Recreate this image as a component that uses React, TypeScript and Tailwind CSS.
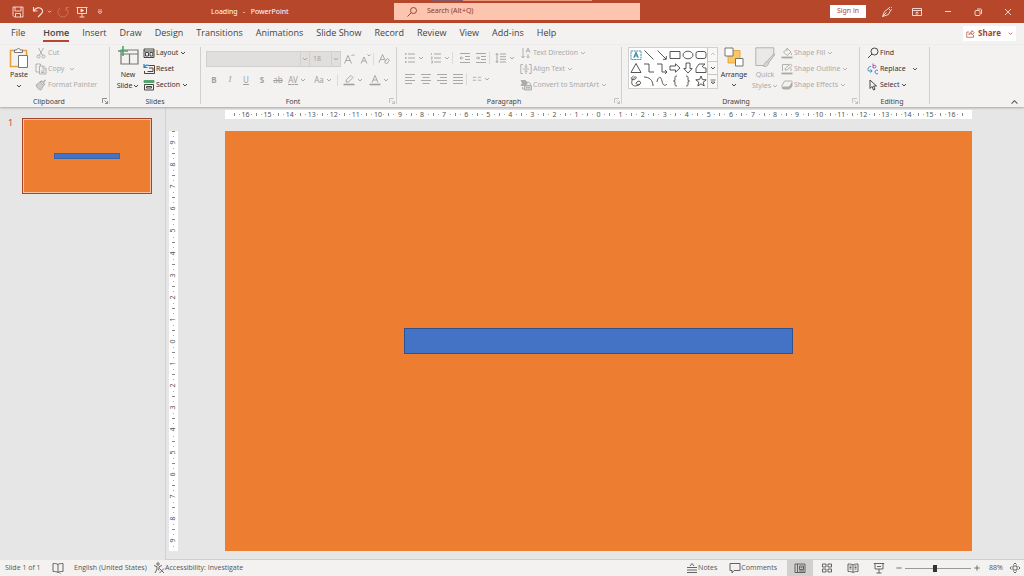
import type { ReactNode } from "react";

interface IconProps {
    children: ReactNode;
    box?: string;
    className?: string;
}

const Icon = ({ children, box = "0 0 12 12", className = "size-3" }: IconProps) => (
    <svg
        viewBox={box}
        className={`shrink-0 ${className}`}
        fill="none"
        stroke="currentColor"
        strokeWidth="0.9"
        aria-hidden="true"
    >
        {children}
    </svg>
);

const Chevron = ({ className = "size-[6px]" }: { className?: string }) => (
    <Icon box="0 0 6 6" className={className}>
        <path d="M1 2l2 2 2-2" />
    </Icon>
);

const Launcher = ({ muted }: { muted?: boolean }) => (
    <button
        aria-label="More options"
        className={`absolute right-[2px] bottom-[3px] ${muted ? "text-[#b0aeac]" : "text-[#666]"}`}
    >
        <Icon box="0 0 6 6" className="size-[6px]">
            <path d="M.5 5V.5H5M2.5 2.5l3 3M5.5 3v2.5H3" strokeWidth="0.7" />
        </Icon>
    </button>
);

interface GroupProps {
    label: string;
    className: string;
    launcher?: ReactNode;
    children: ReactNode;
}

const Group = ({ label, className, launcher, children }: GroupProps) => (
    <section
        className={`relative flex h-[62px] shrink-0 flex-col justify-between after:absolute after:right-0 after:top-[2px] after:bottom-[3px] after:w-px after:bg-[#d2d0ce] ${className}`}
    >
        <div className="flex h-12">{children}</div>
        <div className="h-[11px] text-center text-[7px] leading-[11px] text-[#444]">{label}</div>
        {launcher}
    </section>
);

interface RowProps {
    icon: ReactNode;
    label: string;
    menu?: boolean;
    disabled?: boolean;
}

const RowButton = ({ icon, label, menu, disabled }: RowProps) => (
    <button
        disabled={disabled}
        className="flex h-4 items-center gap-px whitespace-nowrap text-[7px] text-[#333] disabled:text-[#acaaa8]"
    >
        {icon}
        <span>{label}</span>
        {menu && <Chevron className="ml-px size-[6px]" />}
    </button>
);

const ToolButton = ({ label, className = "w-4", children }: { label: string; className?: string; children: ReactNode }) => (
    <button
        disabled
        aria-label={label}
        className={`flex h-4 shrink-0 items-center justify-center gap-[2px] ${className}`}
    >
        {children}
    </button>
);

const Separator = () => <span className="h-3 w-px shrink-0 bg-[#dcdad8]" />;

const tabs = [
    "Insert", "Draw", "Design", "Transitions", "Animations", "Slide Show",
    "Record", "Review", "View", "Add-ins", "Help",
];

const shapes: ReactNode[] = [
    <g stroke="#2f8aa8" key="text">
        <path d="M1 2h10v8.500H1z" strokeDasharray="2 .6" />
        <path d="M3.800 8.800L6 3.500l2.200 5.300M4.600 7h2.800" strokeWidth="1.200" />
    </g>,
    <path key="line" d="M1.500 1.500l9 9" />,
    <path key="arrow" d="M1.500 1.500l8.500 8.500M10.300 7v3.300H7" />,
    <path key="rect" d="M1 2.500h10v7H1z" />,
    <ellipse key="oval" cx="6" cy="6" rx="5" ry="3.8" />,
    <rect key="round" x="1" y="2.500" width="10" height="7" rx="2" />,
    <path key="triangle" d="M6 1.500l5 9H1z" />,
    <path key="elbow" d="M1 2h5v8h5" />,
    <path key="elbow-arrow" d="M1 2h5v8h5M9 8l2 2-2 2" />,
    <path key="right" d="M1 4h5.500V1.800L11 6l-4.500 4.200V8H1z" />,
    <path key="down" d="M4 1v5.500H1.800L6 11l4.200-4.500H8V1z" />,
    <path key="free" d="M1 10.500V6.500l3-4.500h6L7.500 4c0 1.500 1 2 3.500 2v4.500z" />,
    <path key="scribble" d="M3.500 1C0 3 1 5.500 4 4.500S7 1.500 5 2 1 6 2 9s6 2 8 0-1-4-3-2 0 3 3 2.500" />,
    <path key="arc" d="M1 2c5 0 9 3 9 9" />,
    <path key="curve" d="M1 7c1-6 4-6 5-1s3 5 5 3" />,
    <path key="left-brace" d="M8 1C5.500 1 6 2 6 4S5.500 6 4.500 6C5.500 6 6 6 6 8s-.5 3 2 3" />,
    <path key="right-brace" d="M4 1c2.500 0 2 1 2 3s.5 2 1.500 2C6.500 6 6 6 6 8s.5 3-2 3" />,
    <path key="star" d="M6 1l1.400 3.600 3.800.2-3 2.400 1 3.800L6 8.800 2.800 11l1-3.800-3-2.400 3.800-.2z" />,
];

const TitleBar = () => (
    <header className="relative flex h-[23px] items-center bg-[#b7472a] text-[#fbe4dc]">
        <div className="absolute left-[432px] top-0 flex h-px">
            <span className="w-[31px] bg-[#8b5a63]" />
            <span className="w-[129px] bg-[#ee9a7f]" />
        </div>
        <nav aria-label="Quick access" className="flex w-[211px] shrink-0 items-center pl-3">
            <button aria-label="Save">
                <Icon>
                    <path d="M1 1h10v10H2.500L1 9.500zM3 1v4h6V1M3.500 11V7.500h5V11" />
                </Icon>
            </button>
            <button aria-label="Undo" className="ml-2 flex items-center gap-[3px]">
                <Icon>
                    <path d="M1.500 1v4h4M1.500 5C4 1.500 7 1 9 2.500s2 3.500.5 5L6 11" strokeWidth="1.100" />
                </Icon>
                <Chevron className="size-[5px]" />
            </button>
            <button aria-label="Redo" className="ml-[5px] text-[#d0735b]" disabled>
                <Icon>
                    <path d="M3 2a5 5 0 1 0 6 0M9 5V1.500h3" />
                </Icon>
            </button>
            <button aria-label="Start from beginning" className="ml-[7px]">
                <Icon>
                    <path d="M.5 1.500h11M1.500 1.500v6h9v-6M6 7.500V11M3.500 11h5" />
                    <path d="M5 3l2.500 1.500L5 6z" fill="currentColor" />
                </Icon>
            </button>
            <button aria-label="Customize toolbar" className="ml-[9px]">
                <Icon box="0 0 6 6" className="size-[6px]">
                    <path d="M1 1h4M1 2.800l2 2 2-2z" strokeWidth=".7" />
                </Icon>
            </button>
        </nav>
        <h1 className="w-[183px] shrink-0 whitespace-pre pt-px text-[7px] text-white">Loading   -   PowerPoint</h1>
        <label className="flex h-[17px] w-[24%] items-center gap-[9px] bg-[#fdc4b0] pl-3 text-[#8f3b25]">
            <Icon>
                <circle cx="7.500" cy="4.500" r="3" />
                <path d="M5.300 6.700L1.500 10.500" />
            </Icon>
            <input
                type="text"
                aria-label="Search"
                placeholder="Search (Alt+Q)"
                className="w-full bg-transparent text-[7px] outline-none placeholder:text-[#8f3b25]"
            />
        </label>
        <div className="ml-auto flex items-center">
            <button className="h-[13px] w-9 bg-white text-[7px] text-[#b7472a]">Sign in</button>
            <button aria-label="Coming soon" className="ml-[15px]">
                <Icon>
                    <path d="M1.500 10.500l2-5 4-3 2 2-2 4-6 2M1.500 10.500l4-4M7.500 2.500L9 1M9.500 4.500L11 3.500M10 2l.8-.8" />
                </Icon>
            </button>
            <button aria-label="Ribbon display options" className="ml-[18px]">
                <Icon>
                    <path d="M1.500 2.500h9v7h-9zM1.500 4.500h9M6 9V6M4.500 7.200L6 5.800l1.500 1.400" />
                </Icon>
            </button>
            <button aria-label="Minimize" className="ml-[19px]">
                <Icon>
                    <path d="M3 5.500h6" />
                </Icon>
            </button>
            <button aria-label="Restore" className="ml-[18px]">
                <Icon>
                    <rect x="3" y="4.500" width="5" height="5" rx="1" />
                    <path d="M5 3h3.500c.6 0 1 .4 1 1v4" />
                </Icon>
            </button>
            <button aria-label="Close" className="ml-[18px] mr-[10px]">
                <Icon>
                    <path d="M3 3l6 6M9 3L3 9" />
                </Icon>
            </button>
        </div>
    </header>
);

const TabBar = () => (
    <div className="flex h-[22px] items-center bg-[#f3f2f1] pb-[2px] pl-[11px] pr-2 text-[9px] leading-[12px] text-[#444] font-['Open_Sans',sans-serif]">
        <nav className="flex items-center gap-[13px] whitespace-nowrap">
            <button className="mr-[5px]">File</button>
            <button className="relative font-semibold after:absolute after:inset-x-0 after:-bottom-[3px] after:h-[2px] after:bg-[#b7472a]">
                Home
            </button>
            {tabs.map((tab) => (
                <button key={tab}>{tab}</button>
            ))}
        </nav>
        <button className="ml-auto flex h-[15px] w-[53px] items-center justify-center gap-[3px] bg-white text-[8px] font-bold text-[#a4402a]">
            <Icon className="size-[9px]">
                <path d="M4 4H1v7h9V8M4 8c0-3 2-4 4-4V2l3 3-3 3V6C6 6 5 6.500 4 8z" />
            </Icon>
            Share
            <Chevron className="ml-1 size-[5px]" />
        </button>
    </div>
);

const ClipboardGroup = () => (
    <Group label="Clipboard" className="w-[110px] pl-2 pr-5" launcher={<Launcher />}>
        <button className="flex w-[22px] shrink-0 flex-col items-center text-[7px] text-[#333]">
            <Icon box="0 0 20 22" className="mt-[2px] h-[22px] w-5">
                <path d="M6 3.500H1.500v16H9M13 3.500h4.500V8" stroke="#eda03a" strokeWidth="1.600" />
                <path d="M5.500 5.500V3h2.200c.3-2 3.300-2 3.600 0h2.200v2.500z" fill="#fff" stroke="#666" />
                <path d="M9.500 8.500h9v12h-9z" fill="#fff" stroke="#666" />
            </Icon>
            <span className="mt-px h-[10px] leading-[10px]">Paste</span>
            <Chevron className="mt-[3px] size-[6px]" />
        </button>
        <div className="ml-[5px] flex flex-col">
            <RowButton
                disabled
                label="Cut"
                icon={
                    <Icon>
                        <path d="M3.500 1l4.200 7.500M8.500 1L4.300 8.500" />
                        <circle cx="3.500" cy="9.500" r="1.500" />
                        <circle cx="8.500" cy="9.500" r="1.500" />
                    </Icon>
                }
            />
            <div className="flex items-center gap-[5px] text-[#acaaa8]">
                <RowButton
                    disabled
                    label="Copy"
                    icon={
                        <Icon>
                            <path d="M4 9H1V1h4.500v2M4.500 3h4L11 5.500V11H4.500zM8 3v3h3M6 8h3.500M6 9.500h3.500" />
                        </Icon>
                    }
                />
                <Chevron />
            </div>
            <RowButton
                disabled
                label="Format Painter"
                icon={
                    <Icon>
                        <path d="M1 6l4-3 3.500 3.500L6 11c-2 0-4-2-5-5z" fill="currentColor" fillOpacity=".5" />
                        <path d="M5 3l1.500-1L9.500 5 8.500 6.500M8 3.500L10.500 1" strokeWidth="1.300" />
                    </Icon>
                }
            />
        </div>
    </Group>
);

const SlidesGroup = () => (
    <Group label="Slides" className="w-[91px] pl-[5px] pr-[6px]">
        <button className="flex w-[26px] shrink-0 flex-col items-center text-[7px] leading-[11px] text-[#333]">
            <Icon box="0 0 21 20" className="mt-px h-5 w-[21px]">
                <path d="M3 4h17v14H3zM3 8h17M11.500 8v10" stroke="#767676" strokeWidth="1.200" />
                <path d="M5 0v10M0 5h10" stroke="#4fa36a" strokeWidth="1.600" />
            </Icon>
            <span className="mt-[3px]">New</span>
            <span className="flex items-center gap-px whitespace-nowrap">
                Slide <Chevron />
            </span>
        </button>
        <div className="ml-[2px] flex flex-col">
            <RowButton
                menu
                label="Layout"
                icon={
                    <Icon>
                        <path d="M1 2h10v8.500H1zM1 4h10M2.500 5.500h3v3.500h-3zM7 5.500h2.800V9H7z" />
                    </Icon>
                }
            />
            <RowButton
                label="Reset"
                icon={
                    <Icon>
                        <path d="M5 2.500h6.500v8h-10V8M6 5h4v3.500H4.500" />
                        <path d="M1 1v3.500h3.500M1 4.500C2.500 1.500 5 1.500 6 3" stroke="#2f7fc2" strokeWidth="1.200" />
                    </Icon>
                }
            />
            <RowButton
                menu
                label="Section"
                icon={
                    <Icon>
                        <path d="M1 1.500h10v2H1z" fill="#4fa36a" stroke="#4fa36a" />
                        <path d="M1.500 5.500v5.500h9V5.500zM3.500 7.500h5V9h-5z" />
                    </Icon>
                }
            />
        </div>
    </Group>
);

const FontGroup = () => (
    <Group label="Font" className="w-[196px] pl-[5px] pr-[17px]" launcher={<Launcher muted />}>
        <div className="flex shrink-0 flex-col gap-[5px] pt-[6px] text-[#a19f9d]">
            <div className="flex h-4 items-center">
                <div className="flex h-full shrink-0 items-center border border-[#d2d0ce] bg-[#e1dfdd]">
                    <select aria-label="Font" disabled className="h-full w-[93px] appearance-none" />
                    <span className="flex h-full w-[9px] items-center justify-center border-l border-[#d2d0ce]">
                        <Chevron />
                    </span>
                </div>
                <div className="flex h-full shrink-0 items-center border border-l-0 border-[#d2d0ce] bg-[#e1dfdd]">
                    <select aria-label="Font size" disabled className="h-full w-[21px] appearance-none pl-[3px] text-[7px]">
                        <option>18</option>
                    </select>
                    <span className="flex h-full w-[9px] items-center justify-center border-l border-[#d2d0ce]">
                        <Chevron />
                    </span>
                </div>
                <ToolButton label="Increase font size">
                    <Icon>
                        <path d="M1.500 10.500l3.500-8 3.500 8M2.800 7.500h4.400M8.500 3L10 1.500 11.500 3" />
                    </Icon>
                </ToolButton>
                <ToolButton label="Decrease font size">
                    <Icon>
                        <path d="M2 10.500l3-6.500 3 6.500M3 8h4M8.500 1.500L10 3l1.500-1.500" />
                    </Icon>
                </ToolButton>
                <Separator />
                <span className="ml-[2px] flex">
                    <ToolButton label="Clear formatting">
                        <Icon>
                            <path d="M1 9.500l3.500-8 3 6.500M2.500 6.500h3.800M6.500 9l3-3.500 2 1.700L8.500 11z" />
                        </Icon>
                    </ToolButton>
                </span>
            </div>
            <div className="flex h-4 items-center text-[8px]">
                <ToolButton label="Bold"><b>B</b></ToolButton>
                <ToolButton label="Italic"><i className="font-['Liberation_Serif',serif] text-[9px]">I</i></ToolButton>
                <ToolButton label="Underline"><u>U</u></ToolButton>
                <ToolButton label="Shadow"><b>S</b></ToolButton>
                <ToolButton label="Strikethrough"><s>ab</s></ToolButton>
                <ToolButton label="Character spacing" className="w-[22px]">
                    <span className="border-b border-dashed border-current leading-[9px]">AV</span>
                    <Chevron />
                </ToolButton>
                <ToolButton label="Change case" className="ml-1 w-[22px]">Aa<Chevron /></ToolButton>
                <span className="ml-[3px] flex"><Separator /></span>
                <ToolButton label="Highlight color" className="ml-[3px] w-6">
                    <Icon>
                        <path d="M3 8l.5-2.500L8 1.500 10 3.500 5.500 8z" />
                        <path d="M.5 10.500h11" strokeWidth="1.600" />
                    </Icon>
                    <Chevron />
                </ToolButton>
                <ToolButton label="Font color" className="ml-[2px] w-6">
                    <Icon>
                        <path d="M3 8.500L6 1.500l3 7M4 6h4" />
                        <path d="M.5 10.500h11" strokeWidth="1.600" />
                    </Icon>
                    <Chevron />
                </ToolButton>
            </div>
        </div>
    </Group>
);

const ParagraphGroup = () => (
    <Group label="Paragraph" className="w-[225px] pl-[5px] pr-[16px]" launcher={<Launcher muted />}>
        <div className="flex w-[118px] shrink-0 flex-col gap-[5px] pt-[5px] text-[#a19f9d]">
            <div className="flex h-4 items-center">
                <ToolButton label="Bullets" className="w-6">
                    <Icon>
                        <path d="M1 2h1.500M1 6h1.500M1 10h1.500" strokeWidth="1.500" />
                        <path d="M4 2h7M4 6h7M4 10h7" />
                    </Icon>
                    <Chevron />
                </ToolButton>
                <ToolButton label="Numbering" className="ml-[2px] w-6">
                    <Icon>
                        <path d="M1.500 1v2M1 5h1.500L1 7h1.500M1 9h1.500v2H1" strokeWidth=".7" />
                        <path d="M4 2h7M4 6h7M4 10h7" />
                    </Icon>
                    <Chevron />
                </ToolButton>
                <Separator />
                <ToolButton label="Decrease indent" className="ml-1 w-4">
                    <Icon>
                        <path d="M1 1.500h10M6 4.500h5M6 7.500h5M1 10.500h10M4.500 6H1M2.500 4.500L1 6l1.500 1.500" />
                    </Icon>
                </ToolButton>
                <ToolButton label="Increase indent">
                    <Icon>
                        <path d="M1 1.500h10M6 4.500h5M6 7.500h5M1 10.500h10M1 6h3.500M3 4.500L4.500 6 3 7.500" />
                    </Icon>
                </ToolButton>
                <Separator />
                <ToolButton label="Line spacing" className="ml-[3px] w-6">
                    <Icon>
                        <path d="M5 2h6M5 4.700h6M5 7.300h6M5 10h6M2 1.500v9M.7 3L2 1.500 3.300 3M.7 9L2 10.500 3.300 9" />
                    </Icon>
                    <Chevron />
                </ToolButton>
            </div>
            <div className="flex h-4 items-center">
                <ToolButton label="Align left">
                    <Icon><path d="M1 1.500h10M1 4.500h7M1 7.500h10M1 10.500h7" /></Icon>
                </ToolButton>
                <ToolButton label="Center">
                    <Icon><path d="M1 1.500h10M2.500 4.500h7M1 7.500h10M2.500 10.500h7" /></Icon>
                </ToolButton>
                <ToolButton label="Align right">
                    <Icon><path d="M1 1.500h10M4 4.500h7M1 7.500h10M4 10.500h7" /></Icon>
                </ToolButton>
                <ToolButton label="Justify">
                    <Icon><path d="M1 1.500h10M1 4.500h10M1 7.500h10M1 10.500h10" /></Icon>
                </ToolButton>
                <Separator />
                <ToolButton label="Columns" className="ml-1 w-5">
                    <Icon className="size-[10px]"><path d="M1 4h4M1 7.500h4M7 4h4M7 7.500h4" /></Icon>
                    <Chevron />
                </ToolButton>
            </div>
        </div>
        <div className="flex flex-col">
            <RowButton
                disabled
                menu
                label="Text Direction"
                icon={
                    <Icon>
                        <path d="M3 1v10M1.500 9L3 11l1.500-2M6 5.500l2-4.500 2 4.500M6.500 4h3M8 7v4M6.500 9.500L8 11l1.500-1.500" />
                    </Icon>
                }
            />
            <RowButton
                disabled
                menu
                label="Align Text"
                icon={
                    <Icon>
                        <path d="M3 1.500H.8v9H3M9 1.500h2.200v9H9M3 6h6M6 1v3.500M6 7.500V11M4.800 3.200L6 4.500l1.200-1.300M4.800 8.800L6 7.500l1.200 1.300" />
                    </Icon>
                }
            />
            <RowButton
                disabled
                menu
                label="Convert to SmartArt"
                icon={
                    <Icon>
                        <path d="M1 1.500h4.500L7.500 4l-2 2.500H1L2.500 4z" fill="currentColor" />
                        <path d="M4.500 6.500h7v4.500h-7z" fill="currentColor" fillOpacity=".4" />
                        <path d="M2.500 8v2h2M7.500 3c2 0 3 1.500 3 3.500M6 8.700h4" />
                    </Icon>
                }
            />
        </div>
    </Group>
);

const DrawingGroup = () => (
    <Group label="Drawing" className="w-[238px] pl-[6px] pr-[16px]" launcher={<Launcher muted />}>
        <div className="mt-[2px] flex h-[42px] w-[90px] shrink-0 border border-[#d2d0ce] bg-white text-[#444]">
            <div className="grid flex-1 grid-cols-6 grid-rows-3 place-items-center">
                {shapes.map((shape, i) => (
                    <button key={i} aria-label={`Shape ${i + 1}`}>
                        <Icon>{shape}</Icon>
                    </button>
                ))}
            </div>
            <div className="flex w-[10px] flex-col divide-y divide-[#c8c6c4] border-l border-[#c8c6c4] bg-[#f8f7f6]">
                <button aria-label="Scroll up" className="flex flex-1 items-center justify-center text-[#c0bebc]">
                    <Chevron className="size-[6px] rotate-180" />
                </button>
                <button aria-label="Scroll down" className="flex flex-1 items-center justify-center">
                    <Chevron className="size-[6px]" />
                </button>
                <button aria-label="More shapes" className="flex flex-1 items-center justify-center">
                    <Icon box="0 0 6 6" className="size-[6px]">
                        <path d="M.5 1h5M1 3l2 2 2-2z" strokeWidth=".7" />
                    </Icon>
                </button>
            </div>
        </div>
        <button className="ml-[2px] flex w-7 shrink-0 flex-col items-center text-[7px] text-[#333]">
            <Icon box="0 0 20 20" className="mt-[2px] size-5">
                <path d="M7.500 3.500h8.500v8.500h-3.500v4h-8.500v-8.500h3.500z" fill="#f8c766" stroke="#eda03a" />
                <path d="M1 1h8v8H1zM11.500 11.500H19V19h-7.500z" fill="#fff" stroke="#666" />
            </Icon>
            <span className="mt-[3px] h-[10px] leading-[10px]">Arrange</span>
            <Chevron className="mt-[2px] size-[6px]" />
        </button>
        <button
            disabled
            className="ml-[2px] flex w-[30px] shrink-0 flex-col items-center text-[7px] leading-[11px] text-[#acaaa8]"
        >
            <Icon box="0 0 20 21" className="mt-[2px] h-[21px] w-5">
                <path d="M10 18.500H.8V.8h18V9" fill="#ebe9e8" />
                <path d="M19 6.500l-7 8 1.500 1.500L19.500 8zM12 14.500c-2 0-2 3-4 4.500 3 1 5 0 5.500-3" fill="#dcdad8" />
            </Icon>
            <span className="mt-px">Quick</span>
            <span className="flex items-center gap-px">
                Styles <Chevron />
            </span>
        </button>
        <div className="ml-px flex flex-col">
            <RowButton
                disabled
                menu
                label="Shape Fill"
                icon={
                    <Icon>
                        <path d="M2.500 5l4-3.500L10 5 6 8.500zM6 1v3M10.500 6v2" />
                        <path d="M.5 10.500h11" strokeWidth="1.800" />
                    </Icon>
                }
            />
            <RowButton
                disabled
                menu
                label="Shape Outline"
                icon={
                    <Icon>
                        <path d="M8 1.500H1.500V8M4 7l.5-2L9.500 1 11 2.500 6 7zM10 5v3" />
                        <path d="M.5 10.500h11" strokeWidth="1.800" />
                    </Icon>
                }
            />
            <RowButton
                disabled
                menu
                label="Shape Effects"
                icon={
                    <Icon>
                        <path d="M4 2h6c1 0 1.500.5 1 1.500L9 7c-.5.700-1 1-2 1H2C1 8 .5 7.500 1 6.500L3 3c.3-.7.500-1 1-1z" />
                        <path d="M1 8.500C1.500 10 2 10 3 10h4c2 0 3-1 4-3V4L9 7.500 7 8.500z" fill="currentColor" />
                    </Icon>
                }
            />
        </div>
    </Group>
);

const EditingGroup = () => (
    <Group label="Editing" className="w-[70px] pl-[7px] pr-[13px]">
        <div className="flex flex-col">
            <RowButton
                label="Find"
                icon={
                    <Icon>
                        <circle cx="7.500" cy="4.500" r="3.500" />
                        <path d="M5 7L1 11" />
                    </Icon>
                }
            />
            <div className="flex items-center gap-[6px] text-[#444]">
                <RowButton
                    label="Replace"
                    icon={
                        <Icon>
                            <path d="M6 .5V5M6 3c1-1.200 3-.8 3 .7S7 5.500 6 4.500" stroke="#a24bb5" />
                            <path d="M4 3.500C1 3.500.5 6 1.500 8H5M3.500 6.300L5.200 8 3.500 9.700M11 7.500c-1.500-1-3 0-3 1.500s1.500 2.500 3 1.500" stroke="#2f7fc2" />
                        </Icon>
                    }
                />
                <Chevron />
            </div>
            <RowButton
                menu
                label="Select"
                icon={
                    <Icon>
                        <path d="M3 1v8.500l2-2 1.500 3.500L8 10.300 6.600 7H9.500z" />
                    </Icon>
                }
            />
        </div>
    </Group>
);

const Ribbon = () => (
    <div className="relative z-10 flex h-[62px] bg-[#f3f2f1] text-[#555] shadow-[0_1px_2px_#a8a8a8]">
        <ClipboardGroup />
        <SlidesGroup />
        <FontGroup />
        <ParagraphGroup />
        <DrawingGroup />
        <EditingGroup />
        <button aria-label="Collapse the ribbon" className="mb-px ml-auto mr-[6px] self-end">
            <Icon box="0 0 6 6" className="size-[7px] rotate-180">
                <path d="M.5 2L3 4.500 5.500 2" />
            </Icon>
        </button>
    </div>
);

// Numbers count outwards from zero in the middle of the slide
const rulerMarks = (max: number) => Array.from({ length: max * 2 + 1 }, (_, i) => Math.abs(i - max));

const HorizontalRuler = () => (
    <div className="flex h-[9px] items-center bg-white px-[9px] text-[7px] leading-[9px] text-[#555]">
        {rulerMarks(16).map((mark, i) => (
            <div key={i} className="flex min-w-0 flex-1 items-center">
                <span className="h-[3px] w-px bg-[#888]" />
                <span className="ml-1 size-px bg-[#aaa]" />
                <span className="flex w-0 flex-1 justify-center">{mark}</span>
                <span className="mr-1 size-px bg-[#aaa]" />
            </div>
        ))}
        <span className="h-[3px] w-px bg-[#888]" />
    </div>
);

const VerticalRuler = () => (
    <div className="flex w-[9px] flex-col items-center bg-white text-[7px] leading-[9px] text-[#555]">
        {rulerMarks(9).map((mark, i) => (
            <div key={i} className="flex min-h-0 flex-1 flex-col items-center">
                <span className="h-px w-[3px] bg-[#888]" />
                <span className="mt-1 size-px bg-[#aaa]" />
                <span className="flex h-0 flex-1 -rotate-90 items-center">{mark}</span>
                <span className="mb-1 size-px bg-[#aaa]" />
            </div>
        ))}
    </div>
);

const Workspace = () => (
    <main className="flex flex-1 bg-[#e6e6e6]">
        <aside className="flex w-[166px] shrink-0 items-start gap-[9px] border-r border-[#d0d0d0] pl-2 pt-[11px]">
            <span className="w-[5px] text-[9px] leading-[10px] text-[#d04a2a]">1</span>
            <button
                aria-label="Slide 1"
                className="flex h-[76px] w-[130px] items-center justify-center border border-[#a8432a] bg-[#ed7d31] ring-1 ring-inset ring-[#f7c3a0]"
            >
                <span className="h-[6px] w-[66px] border border-[#3c64ac] bg-[#4472c4]" />
            </button>
        </aside>
        <div className="grid flex-1 grid-cols-[9px_1fr] content-start gap-x-[47px] gap-y-3 border-b border-[#cfcfcf] pb-2 pl-[3px] pr-[52px] pt-[3px]">
            <div className="col-start-2">
                <HorizontalRuler />
            </div>
            <VerticalRuler />
            <div className="flex aspect-[747/420] items-center justify-center bg-[#ed7d31]">
                <div className="h-[6.2%] w-[52.2%] border border-[#2f528f] bg-[#4472c4]" />
            </div>
        </div>
    </main>
);

const StatusBar = () => (
    <footer className="flex h-4 shrink-0 items-center whitespace-nowrap bg-[#f3f2f1] pl-[5px] pr-[3px] text-[7px] text-[#555] font-['Open_Sans',sans-serif]">
        <span className="w-[47px]">Slide 1 of 1</span>
        <button aria-label="Spelling">
            <Icon>
                <path d="M6 2.500C4.500 1.500 3 1.500 1 1.500v8c2 0 3.500 0 5 1 1.500-1 2.500-1 5-1v-8c-2 0-3.500 0-5 1zM6 2.500v8M7.500 11l1 .5" />
            </Icon>
        </button>
        <button className="ml-[10px] w-[79px] text-left">English (United States)</button>
        <button className="flex items-center">
            <Icon>
                <circle cx="5" cy="2" r="1.200" />
                <path d="M1 3.500l3 1.200V7l-2 4M9 3.500L6 4.700V7M5 7l1 1.500M6.500 6.500l4.500 4.500M11 6.500L6.500 11" />
            </Icon>
            Accessibility: Investigate
        </button>
        <div className="ml-auto flex items-center">
            <button className="flex items-center">
                <Icon>
                    <path d="M4 4l2-2.500L8 4M1 5.500h10M1 8h10M1 10.500h10" />
                </Icon>
                Notes
            </button>
            <button className="ml-3 flex items-center">
                <Icon>
                    <path d="M1 1.500h10v7H5L3 11V8.500H1z" />
                </Icon>
                Comments
            </button>
            <button aria-label="Normal view" className="ml-[10px] flex h-4 w-[26px] items-center justify-center bg-[#d2d0ce]">
                <Icon>
                    <path d="M1 2h10v8.500H1zM3.500 2v8.500M5.500 4h4v3.500h-4zM5 9h5M6.500 5.700h2" />
                </Icon>
            </button>
            <button aria-label="Slide sorter" className="flex w-[27px] justify-center">
                <Icon>
                    <path d="M1.500 2h3.500v3H1.500zM7 2h3.500v3H7zM1.500 7h3.500v3H1.500zM7 7h3.500v3H7z" />
                </Icon>
            </button>
            <button aria-label="Reading view" className="flex w-[26px] justify-center">
                <Icon>
                    <path d="M6 3C4.500 2 3 2 1 2v7.500c2 0 3.500 0 5 1 1.500-1 3-1 5-1V2c-2 0-3.500 0-5 1zM6 3v7M2.500 4h2M2.500 5.500h2M2.500 7h2M7.500 4h2M7.500 5.500h2M7.500 7h2" />
                </Icon>
            </button>
            <button aria-label="Slide show" className="flex w-[26px] justify-center">
                <Icon>
                    <path d="M.8 1.500h10.400M2 1.500V7h8V1.500M6 7v4M3.500 11h5M4 4.500h4" />
                </Icon>
            </button>
            <button aria-label="Zoom out" className="ml-[3px]">
                <Icon className="size-2"><path d="M2 6h8" strokeWidth="1.200" /></Icon>
            </button>
            <input
                type="range"
                aria-label="Zoom"
                min={10}
                max={400}
                defaultValue={187}
                className="mx-[2px] h-2 w-[66px] appearance-none bg-[linear-gradient(#999,#999)] bg-[length:100%_1px] bg-center bg-no-repeat [&::-webkit-slider-thumb]:h-[7px] [&::-webkit-slider-thumb]:w-[4px] [&::-webkit-slider-thumb]:appearance-none [&::-webkit-slider-thumb]:bg-[#333]"
            />
            <button aria-label="Zoom in">
                <Icon className="size-2"><path d="M2 6h8M6 2v8" strokeWidth="1.200" /></Icon>
            </button>
            <button className="ml-2 w-5 text-left">88%</button>
            <button aria-label="Fit slide to window">
                <Icon>
                    <path d="M4 4h4v4H4zM4.500 2.500L6 1l1.500 1.500M4.500 9.500L6 11l1.500-1.500M2.500 4.500L1 6l1.500 1.500M9.500 4.500L11 6 9.500 7.500" />
                </Icon>
            </button>
        </div>
    </footer>
);

export default function App() {
    return (
        <div className="flex min-h-screen flex-col bg-[#e6e6e6] font-['Noto_Sans',sans-serif]">
            <TitleBar />
            <TabBar />
            <Ribbon />
            <Workspace />
            <StatusBar />
        </div>
    );
}
